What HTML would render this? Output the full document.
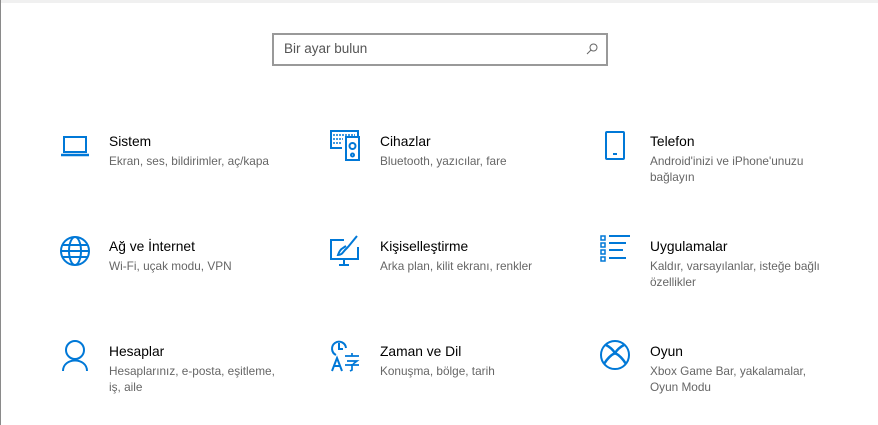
<!DOCTYPE html>
<html><head><meta charset="utf-8"><style>
body{margin:0;width:878px;height:425px;background:#fff;position:relative;overflow:hidden;font-family:"Segoe UI","Liberation Sans",sans-serif}
.top{position:absolute;left:0;top:0;width:878px;height:3px;background:#f0f0f0}
.lb{position:absolute;left:0;top:0;width:1px;height:425px;background:#8a8a8a}
.search{position:absolute;left:272px;top:33px;width:332px;height:29px;border:2px solid #999;}
.search span{position:absolute;left:10px;top:6px;font-size:13.5px;color:#555}
.t{position:absolute;top:133px;font-size:13.8px;line-height:18px;color:#000;white-space:nowrap}
.s{position:absolute;top:153px;font-size:11.8px;line-height:16px;color:#666;width:180px}
svg{position:absolute}
</style></head><body>
<div class="top"></div><div class="lb"></div>
<div class="search"><span>Bir ayar bulun</span>
<svg style="left:312px;top:8px" width="12" height="12" viewBox="0 0 12 12"><circle cx="7.5" cy="4.5" r="3.5" fill="none" stroke="#666" stroke-width="1"/><line x1="5" y1="7" x2="1" y2="11" stroke="#666" stroke-width="1"/></svg></div>

<svg style="left:0;top:0" width="878" height="425" fill="none" stroke="#0078d7" stroke-width="2">
<rect x="64" y="137" width="22" height="15"/><path d="M61 155h28" stroke-width="2.5"/>
<path d="M342 148h-11v-17h27v5"/><path d="M333 135h22M333 139h10M333 143h8" stroke-width="1.5" stroke-dasharray="2 1"/>
<rect x="346" y="137" width="13" height="23"/><circle cx="352.5" cy="146" r="3"/><circle cx="352.5" cy="155" r="1.5"/>
<rect x="606" y="132" width="18" height="27" rx="1"/><path d="M613 154h4" stroke-width="2"/>
<circle cx="75" cy="251" r="14"/><ellipse cx="75" cy="251" rx="6" ry="14"/><path d="M61 251h28M63 245h24M63 257h24"/>
<path d="M344 240h-13v19h27v-12"/><path d="M344 260v5M339 265h10"/>
<path d="M357 236l-9 11M348 247l-3 3c-2 2-3 5-7 5 1-3 3-6 5-7l3-2" />
<rect x="601" y="236" width="4" height="4" stroke-width="1.5"/><rect x="601" y="243" width="4" height="4" stroke-width="1.5"/><rect x="601" y="250" width="4" height="4" stroke-width="1.5"/><rect x="601" y="257" width="4" height="4" stroke-width="1.5"/>
<path d="M609 236h21M609 243h17M609 250h14M609 258h17"/>
<circle cx="75" cy="350" r="9"/><path d="M63 371c0-14 24-14 24 0"/>
<path d="M336 355a7 7 0 1 1 10-7"/><path d="M339 343v6h4"/>
<path d="M332 371l5-13 5 13M334 366h6"/>
<path d="M345 356h14M352 353v3M347 361h10l-4 3M352 364v6l-2 1M345 365h14" stroke-width="1.7"/>
<circle cx="615" cy="355" r="14"/>
<path d="M606 345c4 2 7 5 9 8 2-3 5-6 9-8M604 364c3-5 7-9 11-11 4 2 8 6 11 11" stroke-width="2.5"/>
</svg>

<div class="t" style="left:109px">Sistem</div>
<div class="s" style="left:109px">Ekran, ses, bildirimler, aç/kapa</div>
<div class="t" style="left:380px">Cihazlar</div>
<div class="s" style="left:380px">Bluetooth, yazıcılar, fare</div>
<div class="t" style="left:650px">Telefon</div>
<div class="s" style="left:650px">Android'inizi ve iPhone'unuzu bağlayın</div>

<div class="t" style="left:109px;top:238px">Ağ ve İnternet</div>
<div class="s" style="left:109px;top:258px">Wi-Fi, uçak modu, VPN</div>
<div class="t" style="left:380px;top:238px">Kişiselleştirme</div>
<div class="s" style="left:380px;top:258px">Arka plan, kilit ekranı, renkler</div>
<div class="t" style="left:650px;top:238px">Uygulamalar</div>
<div class="s" style="left:650px;top:258px;width:190px">Kaldır, varsayılanlar, isteğe bağlı özellikler</div>

<div class="t" style="left:109px;top:343px">Hesaplar</div>
<div class="s" style="left:109px;top:363px;width:175px">Hesaplarınız, e-posta, eşitleme, iş, aile</div>
<div class="t" style="left:380px;top:343px">Zaman ve Dil</div>
<div class="s" style="left:380px;top:363px">Konuşma, bölge, tarih</div>
<div class="t" style="left:650px;top:343px">Oyun</div>
<div class="s" style="left:650px;top:363px">Xbox Game Bar, yakalamalar, Oyun Modu</div>
</body></html>
